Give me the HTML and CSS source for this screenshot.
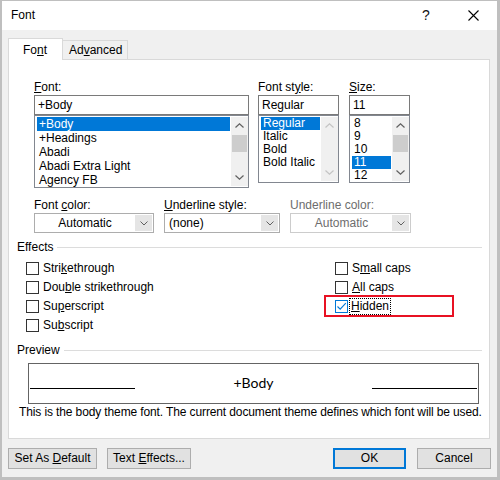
FILE: index.html
```html
<!DOCTYPE html>
<html>
<head>
<meta charset="utf-8">
<title>Font</title>
<link rel="stylesheet" href="styles.css">
</head>
<body>
<div class="window">
  <header class="titlebar">
    <span class="title">Font</span>
    <span class="help">?</span>
    <span class="close"><svg width="11" height="11" viewBox="0 0 11 11"><path d="M0.5 0.5 L10.5 10.5 M10.5 0.5 L0.5 10.5" stroke="#000" stroke-width="1.1" fill="none"/></svg></span>
  </header>
  <main class="content">
    <div class="tabs">
      <div class="tab tab-active">Fo<u>n</u>t</div>
      <div class="tab">Ad<u>v</u>anced</div>
    </div>
    <section class="panel">
      <div class="pickers">
        <div class="picker">
          <div class="lbl"><u>F</u>ont:</div>
          <div class="input">+Body</div>
          <div class="list list-font">
            <div class="items">
              <div class="item sel">+Body</div>
              <div class="item">+Headings</div>
              <div class="item">Abadi</div>
              <div class="item">Abadi Extra Light</div>
              <div class="item">Agency FB</div>
            </div>
            <div class="vscroll">
              <div class="sb-btn"><svg width="9" height="5" viewBox="0 0 9 5"><path d="M0.5 4.5 L4.5 0.8 L8.5 4.5" stroke="#606060" stroke-width="1.2" fill="none"/></svg></div>
              <div class="sb-track"><div class="thumb"></div></div>
              <div class="sb-btn"><svg width="9" height="5" viewBox="0 0 9 5"><path d="M0.5 0.5 L4.5 4.2 L8.5 0.5" stroke="#606060" stroke-width="1.2" fill="none"/></svg></div>
            </div>
          </div>
        </div>
        <div class="picker">
          <div class="lbl">Font st<u>y</u>le:</div>
          <div class="input">Regular</div>
          <div class="list list-small">
            <div class="items">
              <div class="item sel">Regular</div>
              <div class="item">Italic</div>
              <div class="item">Bold</div>
              <div class="item">Bold Italic</div>
            </div>
            <div class="vscroll">
              <div class="sb-btn"><svg width="9" height="5" viewBox="0 0 9 5"><path d="M0.5 4.5 L4.5 0.8 L8.5 4.5" stroke="#c4c4c4" stroke-width="1.2" fill="none"/></svg></div>
              <div class="sb-track"></div>
              <div class="sb-btn"><svg width="9" height="5" viewBox="0 0 9 5"><path d="M0.5 0.5 L4.5 4.2 L8.5 0.5" stroke="#c4c4c4" stroke-width="1.2" fill="none"/></svg></div>
            </div>
          </div>
        </div>
        <div class="picker">
          <div class="lbl"><u>S</u>ize:</div>
          <div class="input">11</div>
          <div class="list list-small">
            <div class="items">
              <div class="item">8</div>
              <div class="item">9</div>
              <div class="item">10</div>
              <div class="item sel">11</div>
              <div class="item">12</div>
            </div>
            <div class="vscroll">
              <div class="sb-btn"><svg width="9" height="5" viewBox="0 0 9 5"><path d="M0.5 4.5 L4.5 0.8 L8.5 4.5" stroke="#606060" stroke-width="1.2" fill="none"/></svg></div>
              <div class="sb-track"><div class="thumb"></div></div>
              <div class="sb-btn"><svg width="9" height="5" viewBox="0 0 9 5"><path d="M0.5 0.5 L4.5 4.2 L8.5 0.5" stroke="#606060" stroke-width="1.2" fill="none"/></svg></div>
            </div>
          </div>
        </div>
      </div>

      <div class="dropdowns">
        <div class="dd">
          <div class="lbl">Font <u>c</u>olor:</div>
          <div class="combo">
            <span class="combo-val centered">Automatic</span>
            <span class="combo-btn"><svg width="8" height="5" viewBox="0 0 8 5"><path d="M0.5 0.5 L4 4 L7.5 0.5" stroke="#606060" stroke-width="1" fill="none"/></svg></span>
          </div>
        </div>
        <div class="dd">
          <div class="lbl"><u>U</u>nderline style:</div>
          <div class="combo">
            <span class="combo-val">(none)</span>
            <span class="combo-btn"><svg width="8" height="5" viewBox="0 0 8 5"><path d="M0.5 0.5 L4 4 L7.5 0.5" stroke="#606060" stroke-width="1" fill="none"/></svg></span>
          </div>
        </div>
        <div class="dd dd-disabled">
          <div class="lbl">Underline color:</div>
          <div class="combo">
            <span class="combo-val centered">Automatic</span>
            <span class="combo-btn"><svg width="8" height="5" viewBox="0 0 8 5"><path d="M0.5 0.5 L4 4 L7.5 0.5" stroke="#606060" stroke-width="1" fill="none"/></svg></span>
          </div>
        </div>
      </div>

      <div class="group">
        <div class="group-title">Effects</div>
        <div class="checks">
          <div class="check-col col-left">
            <div class="check"><span class="box"></span><span class="ctext">Stri<u>k</u>ethrough</span></div>
            <div class="check"><span class="box"></span><span class="ctext">Dou<u>b</u>le strikethrough</span></div>
            <div class="check"><span class="box"></span><span class="ctext">Su<u>p</u>erscript</span></div>
            <div class="check"><span class="box"></span><span class="ctext">Su<u>b</u>script</span></div>
          </div>
          <div class="check-col">
            <div class="check"><span class="box"></span><span class="ctext">S<u>m</u>all caps</span></div>
            <div class="check"><span class="box"></span><span class="ctext"><u>A</u>ll caps</span></div>
            <div class="check check-hl">
              <span class="box box-on"><svg width="11" height="11" viewBox="0 0 11 11"><path d="M1.5 5.5 L4.2 8.2 L9.8 2.2" stroke="#0078d7" stroke-width="1.1" fill="none"/></svg></span>
              <span class="ctext focus"><u>H</u>idden</span>
              <span class="hl"></span>
            </div>
          </div>
        </div>
      </div>

      <div class="group group-preview">
        <div class="group-title">Preview</div>
        <div class="preview-box">
          <span class="pv-line"></span>
          <span class="pv-text">+Body</span>
          <span class="pv-line"></span>
        </div>
        <p class="desc">This is the body theme font. The current document theme defines which font will be used.</p>
      </div>
    </section>

    <div class="buttons">
      <button class="btn btn-default">Set As <u>D</u>efault</button>
      <button class="btn btn-effects">Text <u>E</u>ffects...</button>
      <span class="spacer"></span>
      <button class="btn btn-ok">OK</button>
      <button class="btn btn-cancel">Cancel</button>
    </div>
  </main>
</div>
</body>
</html>
```

FILE: styles.css
```css
* { box-sizing: border-box; }

html, body {
  margin: 0;
  padding: 0;
}

body {
  width: 500px;
  height: 480px;
  font-family: "Liberation Sans", Arial, sans-serif;
  font-size: 12px;
  color: #000;
  background: #bfbfbf;
}

u { text-decoration: underline; text-underline-offset: 1px; }

.window {
  width: 500px;
  height: 480px;
  border-style: solid;
  border-color: #bfbfbf;
  border-width: 1px 3px 3px 2px;
  display: flex;
  flex-direction: column;
  background: #f0f0f0;
}

/* Title bar */
.titlebar {
  height: 29px;
  flex: none;
  background: #fff;
  display: flex;
  align-items: center;
  padding-left: 9px;
}
.title { font-size: 12px; line-height: 15px; flex: 1; }
.help {
  font-size: 14px;
  width: 12px;
  text-align: center;
  margin-right: 36px;
  line-height: 15px;
  color: #111;
}
.close {
  width: 11px;
  height: 11px;
  display: flex;
  margin-right: 18px;
}

/* Content */
.content {
  flex: 1;
  padding: 8px 6px 0 6px;
  display: flex;
  flex-direction: column;
}

.tabs {
  display: flex;
  align-items: flex-end;
  height: 22px;
  margin-bottom: -1px;
  position: relative;
  z-index: 1;
}
.tab {
  height: 20px;
  border: 1px solid #d9d9d9;
  background: #f0f0f0;
  line-height: 18px;
  padding: 0 0 0 6px;
  width: 65px;
  border-left: none;
}
.tab-active {
  height: 22px;
  width: 55px;
  background: #fff;
  border-left: 1px solid #d9d9d9;
  border-bottom: none;
  line-height: 22px;
  padding-left: 14px;
}

.panel {
  height: 380px;
  flex: none;
  margin: 0 1px 0 0;
  background: #fff;
  border: 1px solid #d9d9d9;
  padding: 20px 7px 0 8px;
}

/* Pickers */
.pickers {
  display: grid;
  grid-template-columns: 215px 81px 62px;
  column-gap: 9px;
  margin-left: 17px;
}
.pickers .picker:last-child { margin-left: 1px; }
.lbl { line-height: 15px; height: 15px; white-space: nowrap; }
.input {
  height: 20px;
  border: 1px solid #7a7a7a;
  line-height: 18px;
  padding-left: 3px;
}
.list {
  border: 1px solid #828790;
  padding: 1px 0 0 1px;
  display: grid;
  grid-template-columns: 1fr 17px;
  column-gap: 1px;
}
.list-font { height: 73px; }
.list-small { height: 68px; }
.items { overflow: hidden; }
.item {
  line-height: 14px;
  height: 14px;
  padding-left: 2px;
  white-space: nowrap;
  margin-left: 1px;
}
.list-small .item { height: 13px; line-height: 13px; }
.item.sel { background: #0078d7; color: #fff; }

.vscroll {
  background: #f0f0f0;
  display: flex;
  flex-direction: column;
  margin-bottom: 1px;
}
.sb-btn {
  height: 17px;
  flex: none;
  display: flex;
  align-items: center;
  justify-content: center;
}
.sb-track { flex: 1; padding-top: 1px; }
.thumb { height: 17px; background: #cdcdcd; margin: 0 1px; }

/* Dropdowns */
.dropdowns {
  display: grid;
  grid-template-columns: 120px 116px 121px;
  column-gap: 10px;
  margin: 10px 0 0 17px;
}
.combo {
  height: 20px;
  border: 1px solid #adadad;
  display: flex;
  background: #fff;
}
.combo-val {
  flex: 1;
  line-height: 18px;
  padding-left: 4px;
}
.combo-val.centered { text-align: center; padding-left: 0; }
.combo-btn {
  width: 17px;
  background: #e5e5e5;
  border-left: 1px solid #e5e5e5;
  display: flex;
  align-items: center;
  justify-content: center;
  margin: 1px 1px 1px 0;
}
.dd-disabled .lbl, .dd-disabled .combo-val { color: #6d6d6d; }
.dd-disabled .combo { border-color: #cccccc; }

/* Groups */
.group { margin-top: 7px; }
.group-title {
  display: flex;
  align-items: center;
  line-height: 15px;
  height: 15px;
}
.group-title::after {
  content: "";
  flex: 1;
  height: 1px;
  background: #dcdcdc;
  margin-left: 4px;
  margin-top: -1px;
}

.checks {
  display: grid;
  grid-template-columns: 309px 1fr;
  margin: 4px 0 0 9px;
}
.check {
  height: 19px;
  display: flex;
  align-items: center;
  position: relative;
}
.box {
  width: 13px;
  height: 13px;
  border: 1px solid #333;
  background: #fff;
  flex: none;
  display: flex;
  align-items: center;
  justify-content: center;
}
.box-on { border-color: #0078d7; }
.ctext { margin-left: 4px; line-height: 15px; }
.ctext.focus {
  margin-left: 2px;
  padding: 0 1px;
  outline: 1px dotted #000;
  outline-offset: 0;
}
.hl {
  position: absolute;
  left: -11px;
  top: -2px;
  width: 130px;
  height: 22px;
  border: 2px solid #e81123;
}

.group-preview { margin-top: 8px; }
.preview-box {
  margin: 5px 0 0 11px;
  width: 451px;
  height: 41px;
  border: 1px solid #646464;
  display: flex;
  align-items: flex-start;
  padding: 0 1px;
}
.pv-line {
  width: 105px;
  height: 1px;
  background: #000;
  margin-top: 24px;
}
.pv-text {
  flex: 1;
  text-align: center;
  font-family: Lato, "Liberation Sans", sans-serif;
  font-size: 14px;
  line-height: 18px;
  margin-top: 10px;
}
.desc {
  margin: 1px 0 0 2px;
  line-height: 15px;
  white-space: nowrap;
  letter-spacing: -0.12px;
}

/* Buttons */
.buttons {
  display: flex;
  margin-top: 9px;
}
.spacer { flex: 1; }
.btn {
  height: 21px;
  font-family: "Liberation Sans", Arial, sans-serif;
  font-size: 12px;
  color: #000;
  background: #e1e1e1;
  border: 1px solid #adadad;
  padding: 0;
  line-height: 19px;
}
.btn-default { width: 89px; }
.btn-effects { width: 84px; margin-left: 10px; }
.btn-ok { width: 73px; border: 2px solid #0078d7; line-height: 17px; }
.btn-cancel { width: 74px; margin-left: 11px; }
```
